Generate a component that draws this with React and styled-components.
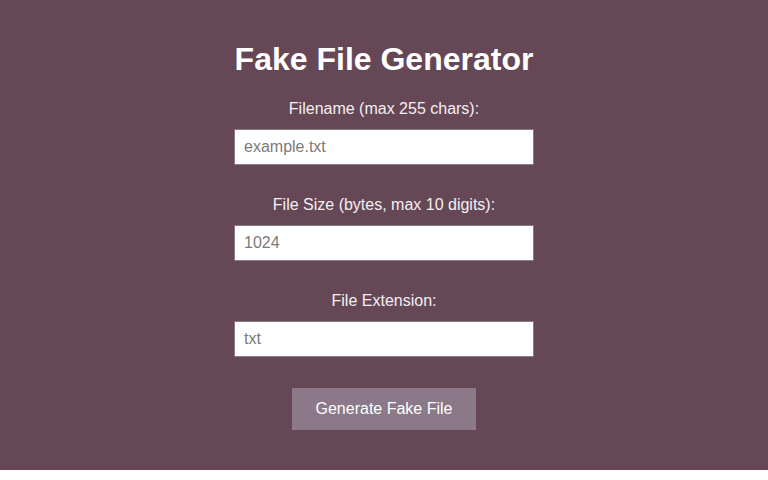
import React, { useState } from 'react';
import styled, { createGlobalStyle } from 'styled-components';

const GlobalStyle = createGlobalStyle`
  body {
    margin: 0;
    background: #ffffff;
    font-family: "Liberation Sans", Arial, sans-serif;
  }
`;

const Page = styled.div`
  background-color: #664756;
  color: #ffffff;
  padding: 40px 0 40px;
  display: flex;
  flex-direction: column;
  align-items: center;
`;

const Title = styled.h1`
  margin: 0 0 21px;
  font-size: 32px;
  line-height: 38px;
  font-weight: bold;
`;

const Form = styled.form`
  display: flex;
  flex-direction: column;
  align-items: center;
`;

const Field = styled.div`
  display: flex;
  flex-direction: column;
  align-items: center;
  margin-bottom: 30px;
`;

const Label = styled.label`
  font-size: 16px;
  line-height: 20px;
  margin-bottom: 10px;
  color: #f4eff2;
`;

const Input = styled.input`
  box-sizing: border-box;
  width: 300px;
  height: 36px;
  padding: 0 9px;
  border: 1px solid #8c7a84;
  background: #ffffff;
  font-family: "Liberation Sans", Arial, sans-serif;
  font-size: 16px;
  color: #333;
  outline: none;

  &::placeholder {
    color: #7a7a7a;
  }
`;

const Button = styled.button`
  margin-top: 1px;
  box-sizing: border-box;
  height: 42px;
  width: 184px;
  border: none;
  background-color: #8b7889;
  color: #ffffff;
  font-family: "Liberation Sans", Arial, sans-serif;
  font-size: 16px;
  cursor: pointer;

  &:hover {
    background-color: #97849a;
  }
`;

const fields = [
  { id: 'filename', label: 'Filename (max 255 chars):', placeholder: 'example.txt' },
  { id: 'size', label: 'File Size (bytes, max 10 digits):', placeholder: '1024' },
  { id: 'ext', label: 'File Extension:', placeholder: 'txt' },
];

const App = () => {
  const [values, setValues] = useState({ filename: '', size: '', ext: '' });

  const handleChange = (e) => {
    setValues({ ...values, [e.target.name]: e.target.value });
  };

  return (
    <>
      <GlobalStyle />
      <Page>
        <Title>Fake File Generator</Title>
        <Form onSubmit={(e) => e.preventDefault()}>
          {fields.map((f) => (
            <Field key={f.id}>
              <Label htmlFor={f.id}>{f.label}</Label>
              <Input
                id={f.id}
                name={f.id}
                placeholder={f.placeholder}
                value={values[f.id]}
                onChange={handleChange}
              />
            </Field>
          ))}
          <Button type="submit">Generate Fake File</Button>
        </Form>
      </Page>
    </>
  );
};

export default App;
